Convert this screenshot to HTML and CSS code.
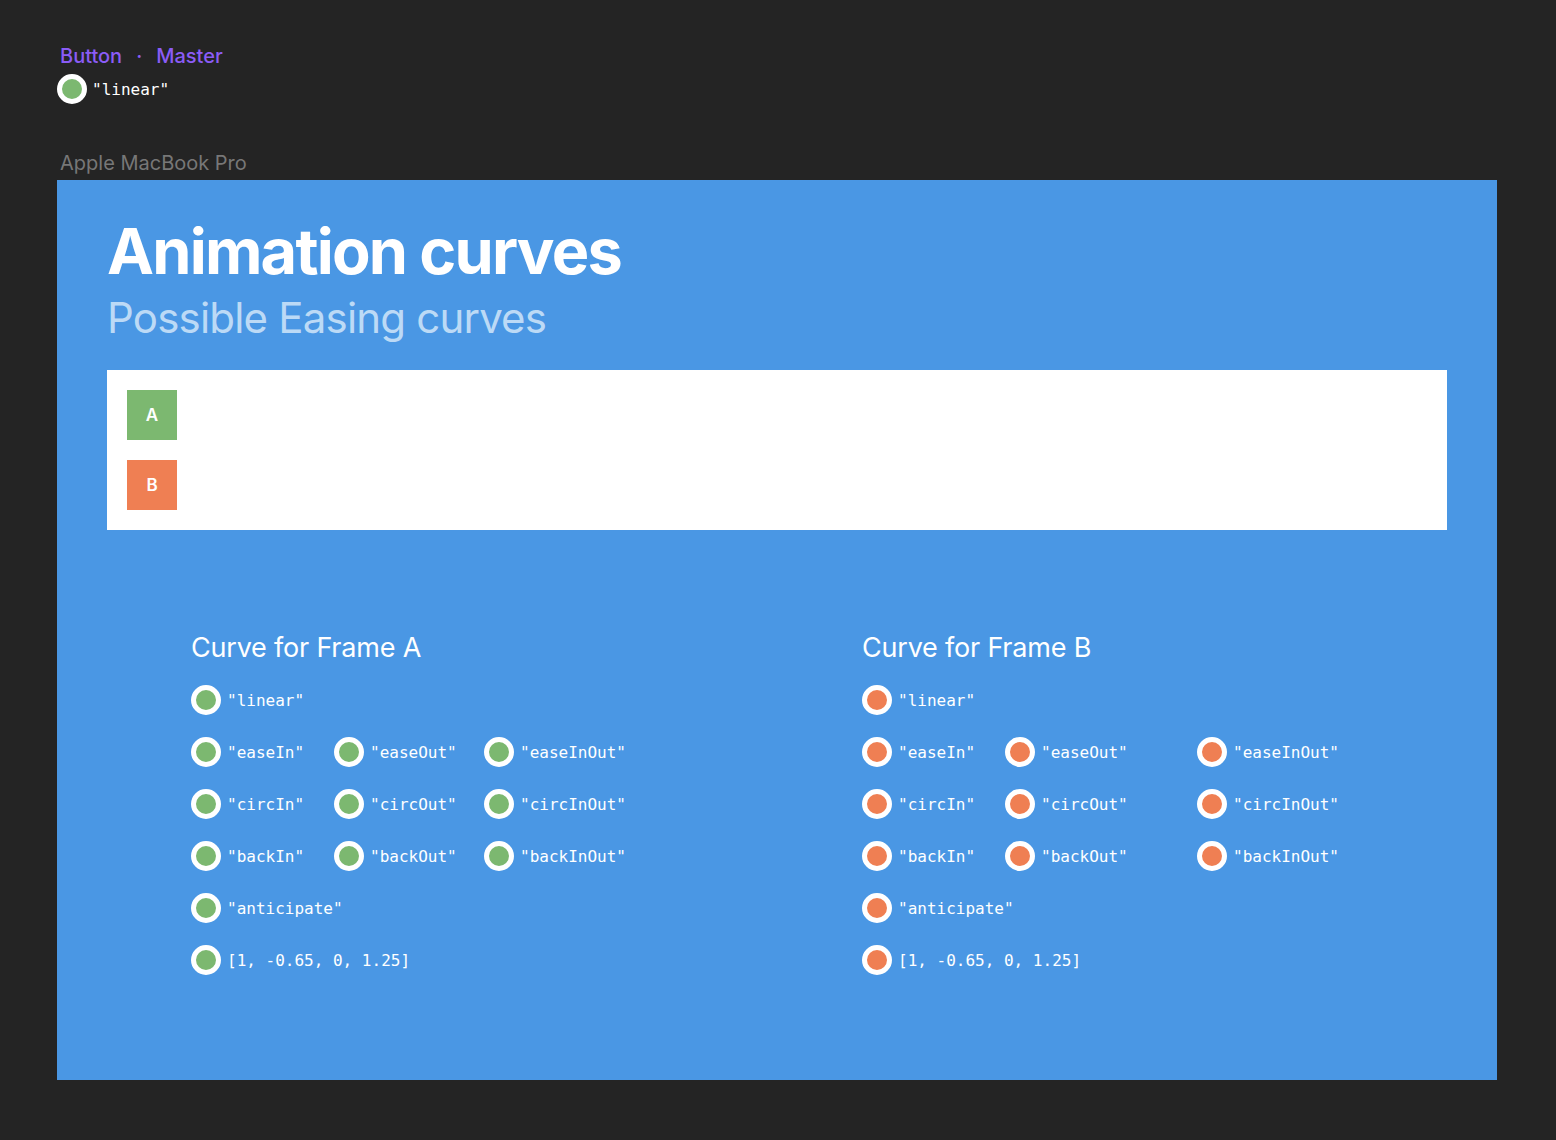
FILE: index.html
```html
<!DOCTYPE html>
<html>
<head>
<meta charset="utf-8">
<link rel="stylesheet" href="styles.css">
</head>
<body>
<div class="top">
  <div class="crumb"><span>Button</span><span class="dot">·</span><span>Master</span></div>
  <div class="opt top-opt"><span class="radio green"></span><span class="label">"linear"</span></div>
</div>
<div class="device">Apple MacBook Pro</div>
<div class="frame">
  <h1 class="title">Animation curves</h1>
  <div class="subtitle">Possible Easing curves</div>
  <div class="stage">
    <div class="box box-a">A</div>
    <div class="box box-b">B</div>
  </div>
  <div class="sections">
    <div class="section sec-a">
      <div class="sec-title">Curve for Frame A</div>
      <div class="grid">
        <div class="opt"><span class="radio green"></span><span class="label">"linear"</span></div>
        <div></div><div></div>
        <div class="opt"><span class="radio green"></span><span class="label">"easeIn"</span></div>
        <div class="opt"><span class="radio green"></span><span class="label">"easeOut"</span></div>
        <div class="opt"><span class="radio green"></span><span class="label">"easeInOut"</span></div>
        <div class="opt"><span class="radio green"></span><span class="label">"circIn"</span></div>
        <div class="opt"><span class="radio green"></span><span class="label">"circOut"</span></div>
        <div class="opt"><span class="radio green"></span><span class="label">"circInOut"</span></div>
        <div class="opt"><span class="radio green"></span><span class="label">"backIn"</span></div>
        <div class="opt"><span class="radio green"></span><span class="label">"backOut"</span></div>
        <div class="opt"><span class="radio green"></span><span class="label">"backInOut"</span></div>
        <div class="opt"><span class="radio green"></span><span class="label">"anticipate"</span></div>
        <div></div><div></div>
        <div class="opt wide"><span class="radio green"></span><span class="label">[1, -0.65, 0, 1.25]</span></div>
      </div>
    </div>
    <div class="section sec-b">
      <div class="sec-title">Curve for Frame B</div>
      <div class="grid">
        <div class="opt"><span class="radio orange"></span><span class="label">"linear"</span></div>
        <div></div><div></div>
        <div class="opt"><span class="radio orange"></span><span class="label">"easeIn"</span></div>
        <div class="opt"><span class="radio orange"></span><span class="label">"easeOut"</span></div>
        <div class="opt"><span class="radio orange"></span><span class="label">"easeInOut"</span></div>
        <div class="opt"><span class="radio orange"></span><span class="label">"circIn"</span></div>
        <div class="opt"><span class="radio orange"></span><span class="label">"circOut"</span></div>
        <div class="opt"><span class="radio orange"></span><span class="label">"circInOut"</span></div>
        <div class="opt"><span class="radio orange"></span><span class="label">"backIn"</span></div>
        <div class="opt"><span class="radio orange"></span><span class="label">"backOut"</span></div>
        <div class="opt"><span class="radio orange"></span><span class="label">"backInOut"</span></div>
        <div class="opt"><span class="radio orange"></span><span class="label">"anticipate"</span></div>
        <div></div><div></div>
        <div class="opt wide"><span class="radio orange"></span><span class="label">[1, -0.65, 0, 1.25]</span></div>
      </div>
    </div>
  </div>
</div>
</body>
</html>
```
FILE: styles.css
```css
html, body {
  margin: 0;
  padding: 0;
}
body {
  background: #242424;
  width: 1556px;
  height: 1140px;
  font-family: Inter, "Noto Sans", sans-serif;
  color: #fff;
  overflow: hidden;
}
.top {
  padding: 44px 0 0 57px;
}
.crumb {
  display: flex;
  align-items: center;
  padding-left: 3px;
  height: 24px;
  font-size: 20px;
  color: #8b5cf6;
  font-weight: 500;
}
.crumb .dot {
  margin: 0 14px 0 14px;
}
.top-opt {
  margin-top: 6px;
}
.top-opt .label {
  margin-left: 5px;
}
.device {
  margin: 47px 0 0 60px;
  height: 24px;
  line-height: 24px;
  font-size: 20px;
  color: #777777;
}
.frame {
  margin: 5px 0 0 57px;
  width: 1440px;
  height: 900px;
  background: #4a97e4;
  box-sizing: border-box;
  padding: 36px 50px 0 50px;
}
.title {
  margin: 0;
  font-size: 63px;
  line-height: 70px;
  font-weight: 700;
  letter-spacing: -1.8px;
}
.subtitle {
  margin-top: 6px;
  font-size: 42px;
  line-height: 52px;
  color: #bcdaf6;
  font-weight: 400;
  letter-spacing: -0.8px;
}
.stage {
  margin-top: 26px;
  background: #fff;
  height: 160px;
  box-sizing: border-box;
  padding: 20px;
  display: flex;
  flex-direction: column;
  gap: 20px;
}
.box {
  width: 50px;
  height: 50px;
  display: flex;
  align-items: center;
  justify-content: center;
  font-size: 17px;
  font-weight: 600;
  color: #fff;
}
.box-a { background: #7cb870; }
.box-b { background: #ef7f53; }
.sections {
  display: flex;
  padding: 100px 0 0 84px;
}
.section.sec-a { width: 671px; }
.sec-title {
  font-size: 27px;
  line-height: 36px;
  font-weight: 400;
  letter-spacing: -0.2px;
  margin-bottom: 19px;
}
.grid {
  display: grid;
  row-gap: 22px;
}
.sec-a .grid { grid-template-columns: 143px 150px auto; }
.sec-b .grid { grid-template-columns: 143px 192px auto; }
.opt {
  display: flex;
  align-items: center;
  height: 30px;
  white-space: nowrap;
}
.radio {
  width: 30px;
  height: 30px;
  box-sizing: border-box;
  border-radius: 50%;
  border: 5px solid #fff;
  flex: none;
}
.radio.green { background: #7cb870; }
.radio.orange { background: #ef7f53; }
.label {
  font-family: "DejaVu Sans Mono", monospace;
  font-size: 16px;
  margin-left: 6px;
  color: #fff;
}
```
